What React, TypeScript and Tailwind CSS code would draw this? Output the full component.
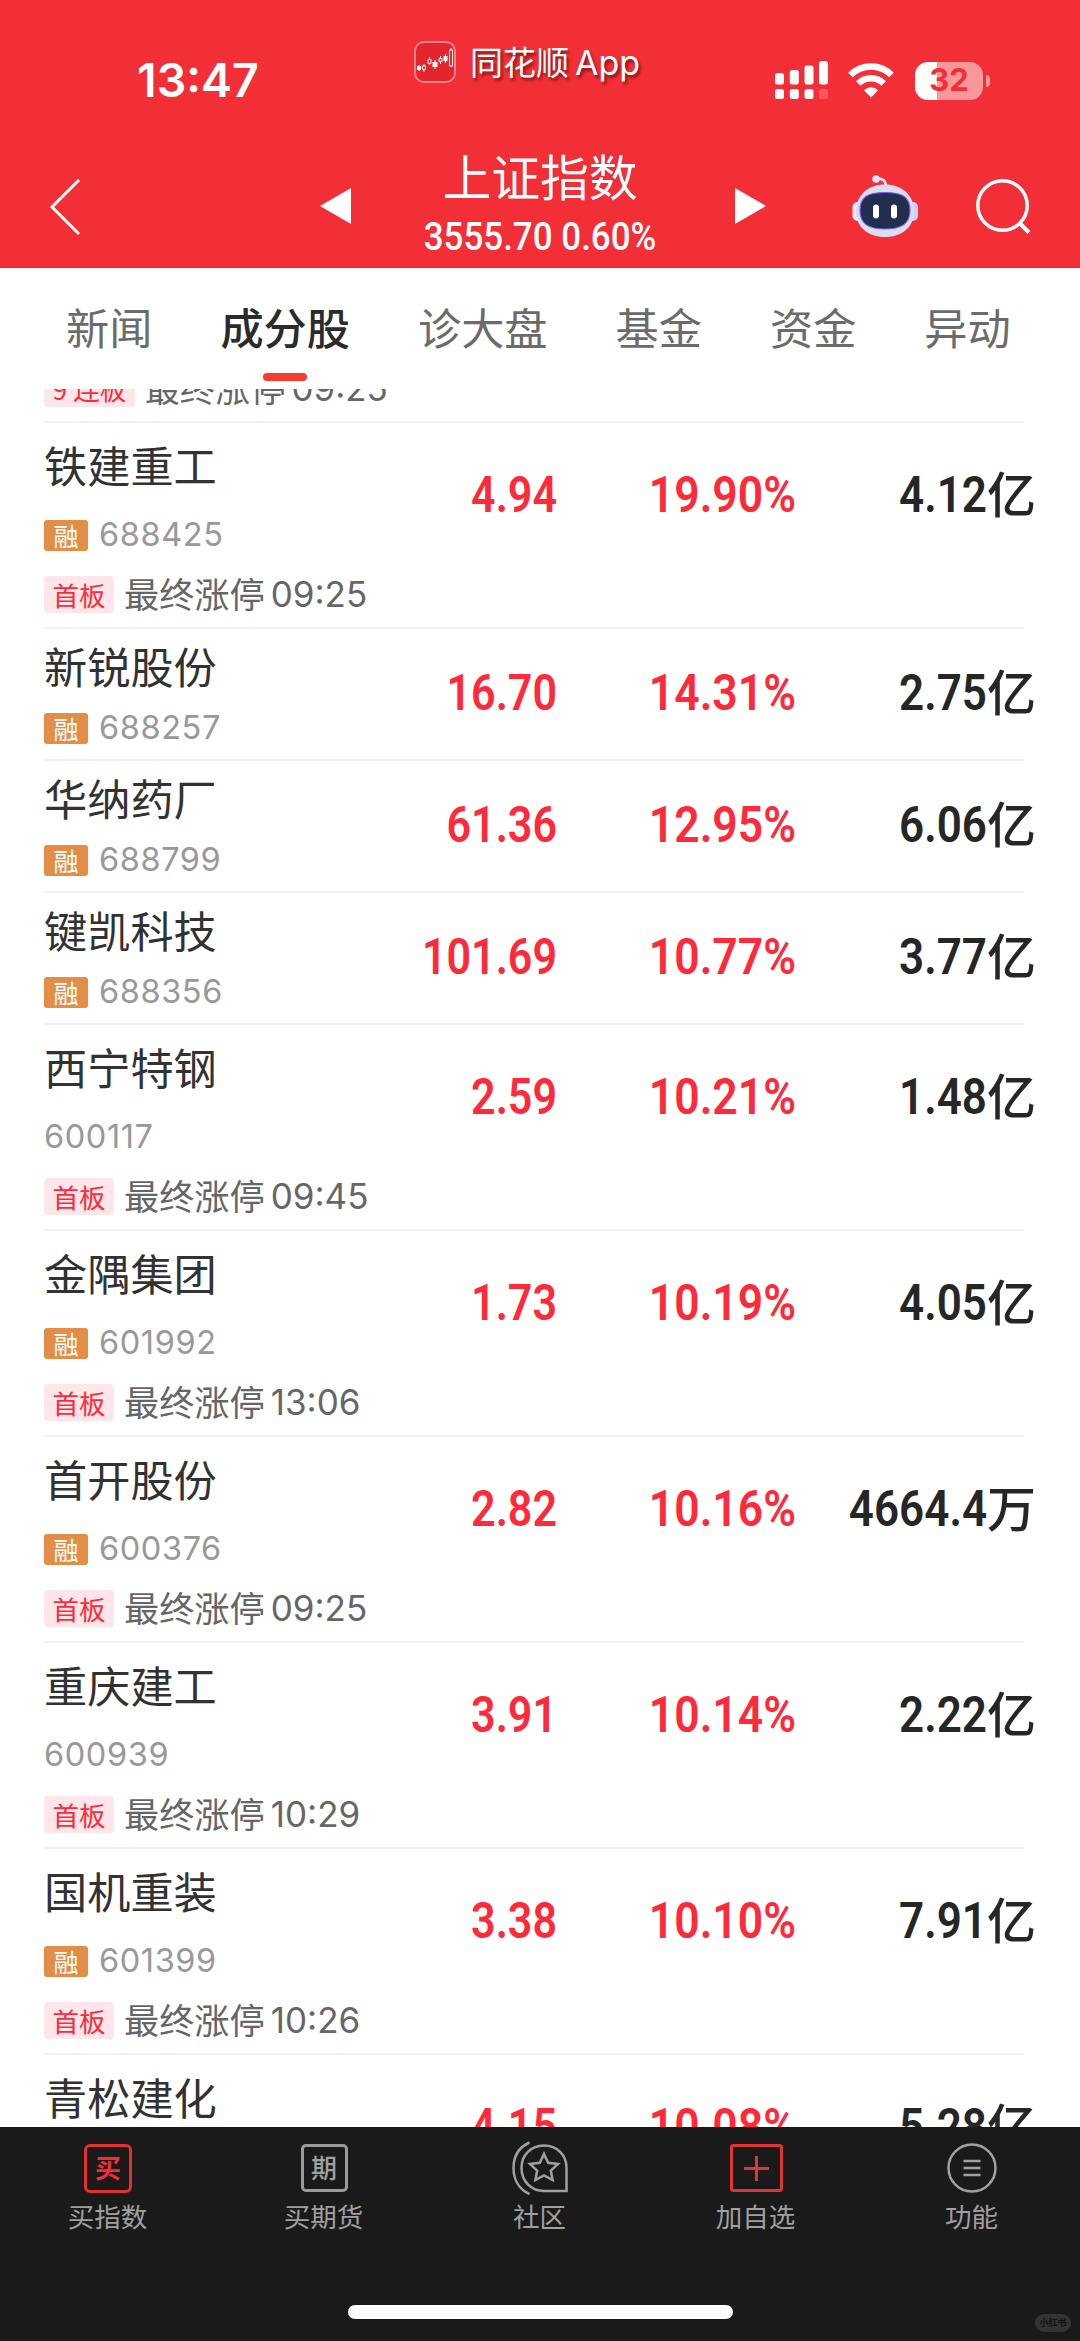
import type { ReactNode } from 'react'
import clsx from 'clsx'

interface Stock {
  name: string
  code: string
  margin?: boolean
  price: string
  change: string
  volume: string
  unit: string
  limitTime?: string
}

const tabs = ['新闻', '成分股', '诊大盘', '基金', '资金', '异动']

const stocks: Stock[] = [
  { name: '铁建重工', code: '688425', margin: true, price: '4.94', change: '19.90%', volume: '4.12', unit: '亿', limitTime: '09:25' },
  { name: '新锐股份', code: '688257', margin: true, price: '16.70', change: '14.31%', volume: '2.75', unit: '亿' },
  { name: '华纳药厂', code: '688799', margin: true, price: '61.36', change: '12.95%', volume: '6.06', unit: '亿' },
  { name: '键凯科技', code: '688356', margin: true, price: '101.69', change: '10.77%', volume: '3.77', unit: '亿' },
  { name: '西宁特钢', code: '600117', price: '2.59', change: '10.21%', volume: '1.48', unit: '亿', limitTime: '09:45' },
  { name: '金隅集团', code: '601992', margin: true, price: '1.73', change: '10.19%', volume: '4.05', unit: '亿', limitTime: '13:06' },
  { name: '首开股份', code: '600376', margin: true, price: '2.82', change: '10.16%', volume: '4664.4', unit: '万', limitTime: '09:25' },
  { name: '重庆建工', code: '600939', price: '3.91', change: '10.14%', volume: '2.22', unit: '亿', limitTime: '10:29' },
  { name: '国机重装', code: '601399', margin: true, price: '3.38', change: '10.10%', volume: '7.91', unit: '亿', limitTime: '10:26' },
  { name: '青松建化', code: '600425', margin: true, price: '4.15', change: '10.08%', volume: '5.28', unit: '亿', limitTime: '10:02' },
]

function AppLogo() {
  return (
    <svg className="w-[42px] h-[42px]" viewBox="0 0 42 42" fill="none">
      <rect x="1" y="1" width="40" height="40" rx="9" fill="#e3262d" stroke="#f98388" strokeWidth="2" />
      <path d="M5 24v6M10 23v8M15.500 16v8M21 19v9M26.500 15v8M31.500 13v9M37 7v19" stroke="#fff" strokeWidth="1" />
      <path d="M3 25h4v4H3zM18.500 21h5v5h-5zM29.500 15h4v5h-4z" fill="#fff" />
      <path d="M8.500 25h3v3.500h-3zM14 18.500h3v4h-3zM25 17.500h3v3h-3zM35.500 9h3v16h-3z" fill="#e3262d" stroke="#fff" strokeWidth="1" />
    </svg>
  )
}

function Signal() {
  return (
    <svg className="w-[54px] h-[39px]" viewBox="0 0 54 39" fill="#fff">
      <rect x="0" y="12" width="9" height="11.500" rx="2.500" />
      <rect x="14.800" y="9" width="9" height="14.500" rx="2.500" />
      <rect x="29.500" y="4.500" width="9" height="19" rx="2.500" />
      <rect x="44" y="0" width="9" height="23.500" rx="2.500" />
      <rect x="0" y="28" width="9" height="10" rx="2.500" />
      <rect x="14.800" y="28" width="9" height="10" rx="2.500" />
      <rect x="29.500" y="28" width="9" height="10" rx="2.500" />
      <rect x="44" y="28" width="9" height="10" rx="2.500" opacity="0.2" />
    </svg>
  )
}

function Wifi() {
  return (
    <svg className="w-[46px] h-[35px]" viewBox="0 0 46 35" fill="none" stroke="#fff">
      <path d="M2.500 12a29 29 0 0 1 41 0" strokeWidth="6.500" />
      <path d="M10.300 20.500a18 18 0 0 1 25.400 0" strokeWidth="6.500" />
      <path d="M23 34.500l-7-7.300a10 10 0 0 1 14 0z" fill="#fff" stroke="none" />
    </svg>
  )
}

function Robot() {
  return (
    <svg className="w-[67px] h-[62px]" viewBox="0 0 67 62" fill="none">
      <path d="M24 4c6-1 9.500 1 10 7" stroke="#e8e6f8" strokeWidth="2.500" />
      <circle cx="24" cy="4" r="3.800" fill="#e4e2f6" />
      <rect x="0.500" y="27" width="12" height="19" rx="5" fill="#eceaf9" />
      <rect x="54" y="27" width="12" height="19" rx="5" fill="#cfcff5" />
      <path d="M33 9.500C50 9.500 62 20 62 36.500 62 52 50 62 33 62S4 52 4 36.500C4 20 16 9.500 33 9.500z" fill="#dcdcf5" />
      <path d="M33 17.500c17 0 25 4 25 18 0 13-8 18.500-25 18.500S8 48.500 8 35.500c0-14 8-18 25-18z" fill="#222d4f" stroke="#7a63e6" strokeWidth="1.200" />
      <rect x="21" y="29.500" width="6" height="14" rx="3" fill="#fff" />
      <rect x="39" y="29.500" width="6" height="14" rx="3" fill="#fff" />
    </svg>
  )
}

function Header() {
  return (
    <header className="h-[268px] bg-[#f22f37] text-white">
      {/* Status bar */}
      <div className="flex h-[140px]">
        <div className="w-[414px] pl-[137px] pt-[52px] font-[Inter] font-semibold text-[46.500px] leading-[57px]">13:47</div>
        <div className="flex w-[361px] h-[42px] mt-[41px] items-center gap-[14px]">
          <AppLogo />
          <div className="flex items-baseline gap-[6px] text-[33px] leading-[42px] [text-shadow:2px_3px_3px_rgba(70,0,0,0.6)]">
            <span>同花顺</span>
            <span className="font-[Inter] text-[34px]">App</span>
          </div>
        </div>
        <div className="flex items-center h-[39px] mt-[61px]">
          <Signal />
          <div className="ml-[19px]"><Wifi /></div>
          <div className="ml-[21px] flex h-[38px] w-[68px] items-center justify-center rounded-[13px] bg-[linear-gradient(90deg,#fff_22px,#f9979b_22px)] font-[Inter] font-bold text-[31px] text-[#f22f37]">32</div>
          <div className="ml-[3px] h-[12px] w-[4px] rounded-r-full bg-[#f9979b]" />
        </div>
      </div>

      {/* Title bar */}
      <div className="flex h-[128px]">
        <div className="w-[320px] pl-[50px] pt-[39px]">
          <svg className="w-[31px] h-[56px]" viewBox="0 0 31 56" fill="none" stroke="#fff" strokeWidth="3">
            <path d="M29 1L2 28l27 27" />
          </svg>
        </div>
        <svg className="w-[31px] h-[36px] mt-[48px]" viewBox="0 0 31 36" fill="#fff"><path d="M31 0v36L0 18z" /></svg>
        <div className="w-[384px] pt-[7px] pr-[6px] text-center">
          <div className="text-[48.800px] leading-[56px]">上证指数</div>
          <div className="font-[Roboto] font-medium text-[38px] leading-[46px] mt-[11px] scale-x-[0.92]">3555.70 0.60%</div>
        </div>
        <svg className="w-[31px] h-[36px] mt-[48px]" viewBox="0 0 31 36" fill="#fff"><path d="M0 0v36l31-18z" /></svg>
        <div className="ml-[86px] mt-[35px]"><Robot /></div>
        <svg className="ml-[57px] mt-[38px] w-[56px] h-[58px]" viewBox="0 0 56 58" fill="none" stroke="#fff" strokeWidth="3.500">
          <circle cx="26.500" cy="27.500" r="24.700" />
          <path d="M43.500 45l9.500 9.500" strokeWidth="4" />
        </svg>
      </div>
    </header>
  )
}

function LimitLine({ badge, time }: { badge: string; time: string }) {
  return (
    <div className="flex h-[37px] items-center whitespace-nowrap">
      <span className="flex h-[37px] items-center rounded-[4px] bg-[#ffe6ea] px-[8.500px] text-[26.500px] text-[#fe2a3a]">{badge}</span>
      <span className="ml-[10px] text-[35.200px] leading-[37px] -mt-[4px] text-[#666]">最终涨停</span>
      <span className="ml-[6px] font-[Inter] text-[35px] leading-[37px] -mt-[1px] text-[#666]">{time}</span>
    </div>
  )
}

function StockRow({ stock }: { stock: Stock }) {
  const tall = Boolean(stock.limitTime)
  return (
    <div className={clsx('shrink-0 flex ml-[44px] w-[980px] border-b-2 border-[#f1f1f3]', tall ? 'h-[206px]' : 'h-[132px]')}>
      <div className={clsx('w-[300px] shrink-0', tall ? 'pt-[13px]' : 'pt-[8px]')}>
        <div className="text-[43.200px] leading-[56px] text-[#323232]">{stock.name}</div>
        <div className={clsx('flex h-[30px] items-center gap-[11px]', tall ? 'mt-[28px]' : 'mt-[20px]')}>
          {stock.margin && (
            <span className="flex h-[31px] w-[44px] items-center justify-center rounded-[3px] bg-[#e28e46] text-[25px] leading-[29px] text-white">融</span>
          )}
          <span className="font-[Inter] text-[32.500px] leading-[30px] tracking-[0.600px] text-[#999]">{stock.code}</span>
        </div>
        {stock.limitTime && (
          <div className="mt-[26px]"><LimitLine badge="首板" time={stock.limitTime} /></div>
        )}
      </div>
      <div className={clsx('flex shrink-0 font-[Roboto] font-semibold text-[50px] leading-[58px]', tall ? 'pt-[43px]' : 'pt-[35px]')}>
        <div className="w-[213px] origin-right scale-x-[0.86] text-right text-[#fe2a3a]">{stock.price}</div>
        <div className="w-[239px] origin-right scale-x-[0.89] text-right text-[#fe2a3a]">{stock.change}</div>
        <div className="flex w-[240px] justify-end text-[#262626]">
          <span className="origin-right scale-x-[0.88]">{stock.volume}</span>
          <span className="-mt-[3px] font-['Noto_Sans_CJK_SC'] font-medium text-[49px]">{stock.unit}</span>
        </div>
      </div>
    </div>
  )
}

function NavItem({ label, children }: { label: string; children: ReactNode }) {
  return (
    <div className="flex flex-1 flex-col items-center">
      <div className="flex h-[54px] items-center justify-center">{children}</div>
      <div className="mt-[2px] pr-[1px] text-[26.500px] leading-[38px] text-[#a0a0a0]">{label}</div>
    </div>
  )
}

function BottomNav() {
  return (
    <nav className="relative h-[214px] bg-[#1a1a1a] pt-[14px]">
      <div className="flex">
        <NavItem label="买指数">
          <div className="flex h-[49px] w-[48px] items-center justify-center rounded-[6px] border-3 border-[#e53030] pb-[2px] text-[26px] leading-[40px] font-bold text-[#f52c36]">买</div>
        </NavItem>
        <NavItem label="买期货">
          <div className="flex h-[48px] w-[47px] items-center justify-center rounded-[5px] border-3 border-[#9a9a9a] pb-[2px] text-[26px] leading-[40px] font-medium text-[#a0a0a0]">期</div>
        </NavItem>
        <NavItem label="社区">
          <svg className="w-[56px] h-[54px]" viewBox="0 0 56 54" fill="none" stroke="#a0a0a0" strokeWidth="2.500">
            <path d="M17.500 1.500C7.500 6 1.500 15 1.500 27s6 21.500 16 26" />
            <path d="M32 4.500c13 0 22.500 9.500 22.500 22v23.500H32C19 50 9.500 40 9.500 27S19 4.500 32 4.500z" />
            <path d="M32 13l4.200 8.800 9.800 1.200-7.200 6.600 1.800 9.400-8.600-4.600-8.600 4.600 1.800-9.400-7.200-6.600 9.800-1.200z" />
          </svg>
        </NavItem>
        <NavItem label="加自选">
          <svg className="w-[53px] h-[48px]" viewBox="0 0 53 48" fill="none" stroke="#e03535" strokeWidth="3">
            <rect x="1.500" y="1.500" width="50" height="45" rx="2" />
            <path d="M26.500 12v25M14 24.500h25" />
          </svg>
        </NavItem>
        <NavItem label="功能">
          <svg className="w-[50px] h-[50px]" viewBox="0 0 50 50" fill="none" stroke="#a0a0a0" strokeWidth="2.500">
            <circle cx="25" cy="25" r="23.500" />
            <path d="M16.500 18h17M16.500 25h17M16.500 32h17" />
          </svg>
        </NavItem>
      </div>
      <div className="mx-auto mt-[70px] h-[14px] w-[385px] rounded-full bg-white" />
      <div className="absolute right-[9px] bottom-[9px] flex h-[18px] w-[36px] items-center justify-center rounded-full bg-[#333] text-[9px] font-bold text-[#111]">小红书</div>
    </nav>
  )
}

export default function App() {
  return (
    <div className="flex h-[2341px] w-[1080px] flex-col overflow-hidden bg-white font-['Noto_Sans_CJK_SC',sans-serif]">
      <Header />

      {/* Tabs */}
      <div className="flex h-[121px] shrink-0 gap-[68px] pl-[66px] pt-[29px] text-[43.200px] leading-[58px] text-[#6b6b6b]">
        {tabs.map((tab) => (
          <div key={tab} className={clsx('flex flex-col items-center', tab === '成分股' && 'font-medium text-[#2b2b2b]')}>
            <span>{tab}</span>
            {tab === '成分股' && <span className="mt-[18px] h-[8px] w-[44px] rounded-full bg-[#f93a30]" />}
          </div>
        ))}
      </div>

      {/* Constituent list, scrolled part-way */}
      <div className="flex h-[1738px] shrink-0 flex-col overflow-hidden">
        <div className="flex h-[34px] w-[980px] shrink-0 flex-col justify-end border-b-2 border-[#f1f1f3] ml-[44px] pb-[14px]">
          <LimitLine badge="9 连板" time="09:25" />
        </div>
        {stocks.map((stock) => (
          <StockRow key={stock.code} stock={stock} />
        ))}
      </div>

      <BottomNav />
    </div>
  )
}
